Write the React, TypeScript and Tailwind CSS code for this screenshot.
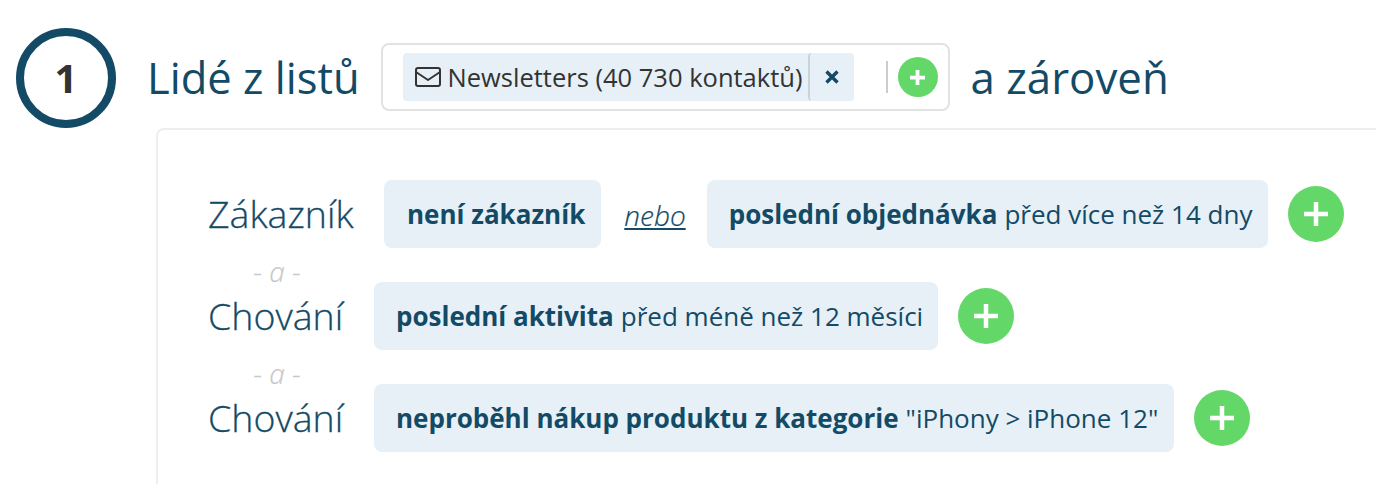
const Plus = ({ small }: { small?: boolean }) => (
    <button className={small ? 'w-10 h-10 rounded-full bg-[#64d769] flex items-center justify-center shrink-0' : 'w-14 h-14 rounded-full bg-[#64d769] flex items-center justify-center shrink-0'}>
        <svg className={small ? 'w-[15px] h-[15px]' : 'w-6 h-6'} viewBox="0 0 24 24" fill="none" stroke="#fff" strokeWidth={small ? 6 : 4.5}>
            <path d="M12 0v24M0 12h24" />
        </svg>
    </button>
);

const Chip = ({ bold, rest, className }: { bold: string; rest?: string; className: string }) => (
    <div className={`h-[68px] rounded-lg bg-[#e6f0f6] flex items-center text-[26px] text-[#134a66] whitespace-nowrap ${className}`}>
        <b className="font-bold">{bold}</b>
        {rest && <span className="ml-[7px]">{rest}</span>}
    </div>
);

const Connector = () => (
    <div className="w-[138px] h-[34px] pt-3 flex items-center justify-center text-[28px] leading-none italic font-light text-[#c8c8c8] [-webkit-text-stroke:0.2px]">- a -</div>
);

export default function App() {
    return (
        <div className="w-[1376px] h-[484px] overflow-hidden bg-white font-['Open_Sans','Noto_Sans',sans-serif] text-[#134a66]">
            <div className="flex items-center pt-[28px] pl-4">
                <div className="w-[100px] h-[100px] rounded-full border-[8px] border-[#134a66] flex items-center justify-center text-[40px] font-bold text-[#333]">1</div>
                <div className="ml-[31px] text-[43.5px] leading-none">Lidé z listů</div>
                <div className="ml-[21px] -mt-[2px] w-[569px] h-[68px] rounded-lg border-2 border-[#e2e2e2] flex items-center pl-5">
                    <div className="h-12 w-[451px] rounded bg-[#e6f0f6] flex items-center text-[25.5px] text-[#333] pl-3">
                        <svg className="w-[26px] h-[20px] shrink-0" viewBox="0 0 26 20" fill="none" stroke="#333" strokeWidth="2" strokeLinejoin="round">
                            <rect x="1" y="1" width="24" height="18" rx="2" />
                            <path d="M1 5l12 8 12-8" />
                        </svg>
                        <span className="ml-[7px] pt-px w-[360px] whitespace-nowrap">Newsletters (40 730 kontaktů)</span>
                        <div className="h-12 w-[46px] rounded-l border-l-2 border-[#c9d3da] flex items-center justify-center">
                            <svg className="w-[14px] h-[14px]" viewBox="0 0 14 14" fill="none" stroke="#134a66" strokeWidth="3.4">
                                <path d="M1.5 1.5l11 11M12.5 1.5l-11 11" />
                            </svg>
                        </div>
                    </div>
                    <div className="ml-[32px] w-[2px] h-8 bg-[#cccccc]" />
                    <div className="ml-[10px]"><Plus small /></div>
                </div>
                <div className="ml-[21px] text-[43.8px] leading-none">a zároveň</div>
            </div>
            <div className="ml-[156px] h-[400px] rounded-tl-lg border-l-2 border-t-2 border-[#eeeeee] pl-[50px] pt-[50px]">
                <div className="flex items-center">
                    <div className="w-[176px] text-[37.5px] font-light leading-none [-webkit-text-stroke:0.3px]">Zákazník</div>
                    <Chip bold="není zákazník" className="pl-[23px] pr-4" />
                    <a className="ml-[23px] mr-[21px] pt-px text-[28px] italic font-light underline [-webkit-text-stroke:0.2px]">nebo</a>
                    <Chip bold="poslední objednávka" rest="před více než 14 dny" className="pl-[22px] pr-4" />
                    <div className="ml-5"><Plus /></div>
                </div>
                <Connector />
                <div className="flex items-center">
                    <div className="w-[166px] text-[37.5px] font-light leading-none [-webkit-text-stroke:0.3px]">Chování</div>
                    <Chip bold="poslední aktivita" rest="před méně než 12 měsíci" className="pl-[22px] pr-[15px]" />
                    <div className="ml-5"><Plus /></div>
                </div>
                <Connector />
                <div className="flex items-center">
                    <div className="w-[166px] text-[37.5px] font-light leading-none [-webkit-text-stroke:0.3px]">Chování</div>
                    <Chip bold="neproběhl nákup produktu z kategorie" rest={'"iPhony > iPhone 12"'} className="pl-[22px] pr-4" />
                    <div className="ml-5"><Plus /></div>
                </div>
            </div>
        </div>
    );
}
